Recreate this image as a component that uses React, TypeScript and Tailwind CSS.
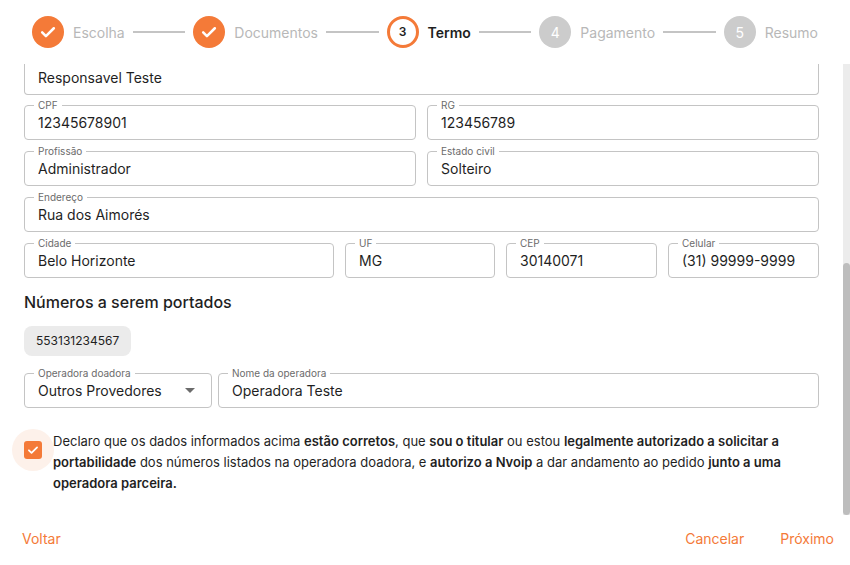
import React from "react";

const Field = ({ label, value, className = "", select = false }: { label?: string; value: string; className?: string; select?: boolean }) => (
  <div className={`relative h-[35px] rounded border border-[#c4c4c4] flex items-center px-[13px] ${className}`}>
    {label && (
      <span className="absolute -top-[7px] left-[9px] bg-white px-[4px] text-[10px] leading-[12px] text-[#6b6b6b]">{label}</span>
    )}
    <span className="text-[14px] text-[#1f1f1f] flex-1 truncate">{value}</span>
    {select && <span className="w-0 h-0 border-l-[5px] border-r-[5px] border-t-[5px] border-l-transparent border-r-transparent border-t-[#6b6b6b] mr-[3px]" />}
  </div>
);

const Check = () => (
  <svg viewBox="0 0 24 24" className="w-[20px] h-[20px]" fill="none" stroke="white" strokeWidth="3" strokeLinecap="round" strokeLinejoin="round">
    <path d="M5 12.5l4.5 4.5L19 7.5" />
  </svg>
);

const Step = ({ n, label, state }: { n: number; label: string; state: "done" | "active" | "todo" }) => (
  <div className="flex items-center gap-[9px]">
    {state === "done" && <div className="w-[32px] h-[32px] rounded-full bg-[#f47a38] flex items-center justify-center"><Check /></div>}
    {state === "active" && <div className="w-[32px] h-[32px] rounded-full border-[3px] border-[#f47a38] flex items-center justify-center text-[12px] font-semibold text-[#1f1f1f]">{n}</div>}
    {state === "todo" && <div className="w-[32px] h-[32px] rounded-full bg-[#cccccc] flex items-center justify-center text-[14px] text-white">{n}</div>}
    <span className={`text-[14px] ${state === "active" ? "font-semibold text-[#1f1f1f]" : "text-[#b8b8b8]"}`}>{label}</span>
  </div>
);

const Line = () => <div className="flex-1 h-[2px] bg-[#c4c4c4] mx-[8px]" />;

export default function App() {
  return (
    <div className="w-[850px] h-[565px] bg-white flex flex-col overflow-hidden" style={{ fontFamily: "Inter, 'Noto Sans', sans-serif" }}>
      <div className="h-[64px] flex items-center px-[32px] shrink-0">
        <Step n={1} label="Escolha" state="done" />
        <Line />
        <Step n={2} label="Documentos" state="done" />
        <Line />
        <Step n={3} label="Termo" state="active" />
        <Line />
        <Step n={4} label="Pagamento" state="todo" />
        <Line />
        <Step n={5} label="Resumo" state="todo" />
      </div>
      <div className="flex h-[451px] shrink-0">
        <div className="flex-1 overflow-hidden pl-[24px] pr-[24px]">
          <div className="-mt-[10px] flex flex-col">
            <Field label="" value="Responsavel Teste" className="h-[41px] rounded-t-none border-t-0 pt-[6px]" />
            <div className="flex gap-[11px] mt-[10px]">
              <Field label="CPF" value="12345678901" className="flex-1" />
              <Field label="RG" value="123456789" className="flex-1" />
            </div>
            <div className="flex gap-[11px] mt-[11px]">
              <Field label="Profissão" value="Administrador" className="flex-1" />
              <Field label="Estado civil" value="Solteiro" className="flex-1" />
            </div>
            <Field label="Endereço" value="Rua dos Aimorés" className="mt-[11px]" />
            <div className="flex gap-[11px] mt-[11px]">
              <Field label="Cidade" value="Belo Horizonte" className="w-[310px]" />
              <Field label="UF" value="MG" className="w-[150px]" />
              <Field label="CEP" value="30140071" className="w-[151px]" />
              <Field label="Celular" value="(31) 99999-9999" className="flex-1" />
            </div>
            <h2 className="mt-[13px] text-[16px] font-medium text-[#1f1f1f] leading-[22px]">Números a serem portados</h2>
            <div className="mt-[13px] self-start h-[30px] px-[12px] rounded-[8px] bg-[#ebebeb] flex items-center text-[12px] text-[#1f1f1f]">553131234567</div>
            <div className="flex gap-[6px] mt-[17px]">
              <Field label="Operadora doadora" value="Outros Provedores" className="w-[188px]" select />
              <Field label="Nome da operadora" value="Operadora Teste" className="flex-1" />
            </div>
            <div className="flex mt-[23px] -ml-[12px]">
              <div className="w-[42px] h-[42px] rounded-full bg-[#fdf1ea] flex items-center justify-center shrink-0 mt-[-2px]">
                <div className="w-[18px] h-[18px] rounded-[3px] bg-[#f47a38] flex items-center justify-center">
                  <svg viewBox="0 0 24 24" className="w-[14px] h-[14px]" fill="none" stroke="white" strokeWidth="3" strokeLinecap="round" strokeLinejoin="round"><path d="M5 12.5l4.5 4.5L19 7.5" /></svg>
                </div>
              </div>
              <p className="text-[13px] leading-[21px] text-[#1f1f1f] ml-[-1px]">
                Declaro que os dados informados acima <b className="font-semibold">estão corretos</b>, que <b className="font-semibold">sou o titular</b> ou estou <b className="font-semibold">legalmente autorizado a solicitar a portabilidade</b> dos números listados na operadora doadora, e <b className="font-semibold">autorizo a Nvoip</b> a dar andamento ao pedido <b className="font-semibold">junto a uma operadora parceira.</b>
              </p>
            </div>
          </div>
        </div>
        <div className="w-[7px] bg-[#ececec] flex flex-col">
          <div className="mt-[199px] flex-1 bg-[#bdbdbd] rounded-full" />
        </div>
      </div>
      <div className="flex-1 flex items-center pl-[22px] pr-[16px] pb-[3px] text-[14px] text-[#f47a38]">
        <span>Voltar</span>
        <span className="ml-auto">Cancelar</span>
        <span className="ml-[36px]">Próximo</span>
      </div>
    </div>
  );
}
